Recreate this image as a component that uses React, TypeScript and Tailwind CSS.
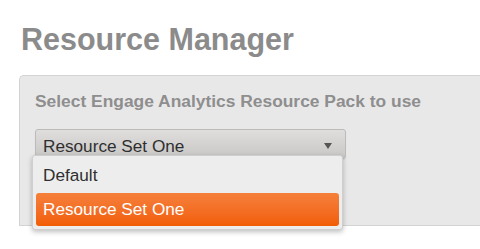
export default function App() {
  return (
    <div className="w-[480px] h-[249px] bg-white overflow-hidden font-['Liberation_Sans',Arial,sans-serif]">
      <h1 className="pl-[21px] pt-[24px] text-[30.5px] leading-[30px] font-bold text-[#8b8b8b]">
        Resource Manager
      </h1>

      {/* Settings panel */}
      <div className="relative ml-[19px] mt-[21px] h-[151px] bg-[#e9e8e9] border-t border-l border-b border-[#d4d3d4] rounded-tl-[5px] pt-[15px] pl-[15px]">
        <p className="text-[17.4px] leading-[20px] font-bold text-[#8e8e8e]">
          Select Engage Analytics Resource Pack to use
        </p>

        <div className="mt-[18px] w-[311px] h-[30px] rounded-[3px] border border-[#bdbbba] bg-gradient-to-b from-[#e0dedd] to-[#c9c7c6] flex items-center justify-between pl-[7px] pr-[13px] pt-[3px] shadow-[0_1px_1px_rgba(0,0,0,0.08)]">
          <span className="text-[17.2px] leading-[20px] text-[#2f2f2f]">Resource Set One</span>
          <svg width="8" height="6" viewBox="0 0 8 6" className="mt-[1px]">
            <path d="M0 0 H8 L4 6 Z" fill="#555555" />
          </svg>
        </div>

        {/* Open list */}
        <div className="absolute left-[12px] top-[79px] w-[311px] bg-[#eeeded] border border-[#cfcfcf] rounded-[3px] p-[3px] shadow-[0_2px_5px_rgba(0,0,0,0.25)]">
          <div className="h-[33px] flex items-center pl-[7px] text-[17.2px] text-[#2f2f2f]">Default</div>
          <div className="mt-[1px] h-[33px] flex items-center pl-[7px] rounded-[3px] bg-gradient-to-b from-[#f5803a] to-[#f25d02] text-[17.2px] text-white">
            Resource Set One
          </div>
        </div>
      </div>
    </div>
  );
}
